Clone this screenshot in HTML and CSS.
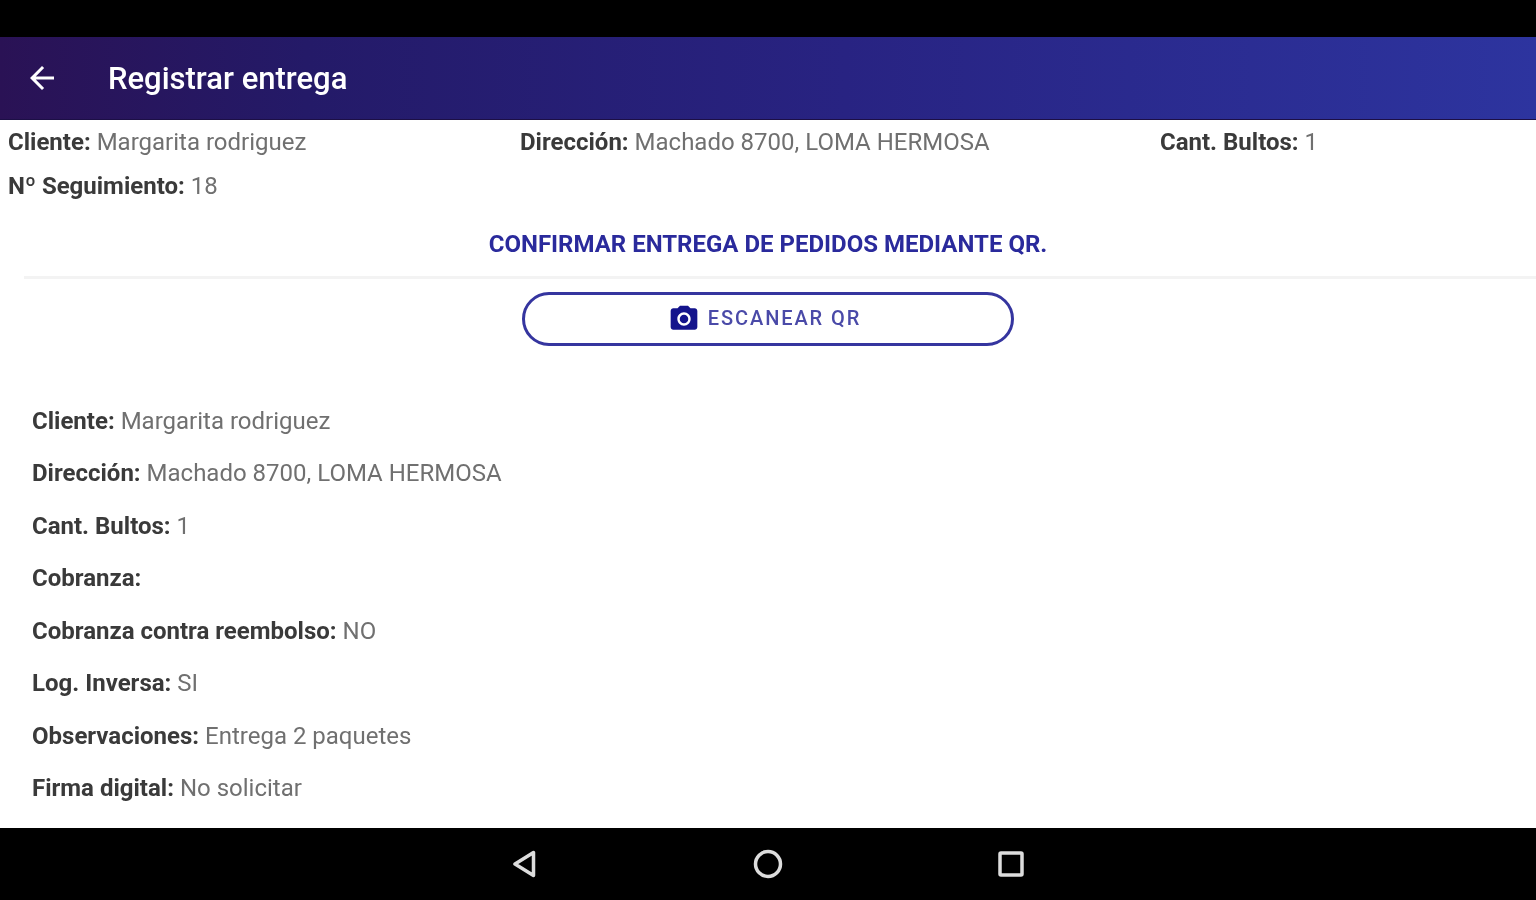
FILE: index.html
```html
<!DOCTYPE html>
<html lang="es">
<head>
  <meta charset="UTF-8">
  <title>Registrar entrega</title>
  <link rel="stylesheet" href="styles.css">
</head>
<body>
<div class="status-bar"></div>
<header class="toolbar">
  <svg class="back-icon" viewBox="0 0 24 24" width="36" height="36"><path d="M20 11H7.83l5.59-5.59L12 4l-8 8 8 8 1.41-1.41L7.83 13H20v-2z"/></svg>
  <h1>Registrar entrega</h1>
</header>
<main class="page">
  <div class="summary">
    <p class="summary-client"><b>Cliente:</b> Margarita rodriguez</p>
    <p class="summary-address"><b>Dirección:</b> Machado 8700, LOMA HERMOSA</p>
    <p><b>Cant. Bultos:</b> 1</p>
    <p class="summary-tracking"><b>Nº Seguimiento:</b> 18</p>
  </div>
  <h2 class="confirm-title">CONFIRMAR ENTREGA DE PEDIDOS MEDIANTE QR.</h2>
  <hr class="divider">
  <button class="scan-button">
    <svg viewBox="0 0 24 24" width="32" height="32"><path d="M9 2 7.17 4H4c-1.1 0-2 .9-2 2v12c0 1.1.9 2 2 2h16c1.1 0 2-.9 2-2V6c0-1.1-.9-2-2-2h-3.17L15 2H9zm3 15c-2.76 0-5-2.24-5-5s2.24-5 5-5 5 2.24 5 5-2.24 5-5 5zm0-8.2a3.2 3.2 0 1 0 0 6.4 3.2 3.2 0 0 0 0-6.4z"/></svg>
    <span>ESCANEAR QR</span>
  </button>
  <ul class="details">
    <li><b>Cliente:</b> Margarita rodriguez</li>
    <li><b>Dirección:</b> Machado 8700, LOMA HERMOSA</li>
    <li><b>Cant. Bultos:</b> 1</li>
    <li><b>Cobranza:</b></li>
    <li><b>Cobranza contra reembolso:</b> NO</li>
    <li><b>Log. Inversa:</b> SI</li>
    <li><b>Observaciones:</b> Entrega 2 paquetes</li>
    <li><b>Firma digital:</b> No solicitar</li>
  </ul>
</main>
<nav class="nav-bar">
  <svg viewBox="0 0 32 32" width="32" height="32"><path d="M24.5 4.5v23L6 16z"/></svg>
  <svg viewBox="0 0 32 32" width="32" height="32"><circle cx="16" cy="16" r="12.5"/></svg>
  <svg viewBox="0 0 32 32" width="32" height="32"><rect x="5" y="5" width="22" height="22" rx="1"/></svg>
</nav>
</body>
</html>
```

FILE: styles.css
```css
* {
  box-sizing: border-box;
}

html, body {
  width: 100%;
  height: 100%;
  overflow: hidden;
  margin: 0;
  padding: 0;
  font: 24px Roboto, sans-serif;
  background: #fff;
  color: #707070;
}

body {
  display: flex;
  flex-direction: column;
}

b {
  font-weight: 700;
  color: #3a3a3a;
}

.status-bar {
  height: 37px;
  background: #000;
}

.toolbar {
  height: 83px;
  display: flex;
  align-items: center;
  padding-left: 24px;
  background: linear-gradient(90deg, #2a1255, #241a68 20%, #282382 55%, #2d349f);
  border-bottom: 1px solid #1c0f45;
  color: #fff;
}

.back-icon {
  fill: #fff;
  filter: blur(0.5px);
}

.toolbar h1 {
  margin: 0 0 0 48px;
  font-size: 31px;
  font-weight: 500;
  filter: blur(0.6px);
}

.page {
  flex: 1;
  min-height: 0;
  filter: blur(0.7px);
}

.summary {
  display: grid;
  grid-template-columns: 512px 640px 1fr;
  padding: 0 0 0 8px;
}

.summary p {
  margin: 0;
  height: 44px;
  line-height: 44px;
}

.confirm-title {
  margin: 21px 0 0;
  height: 32px;
  line-height: 30px;
  text-align: center;
  font-size: 24px;
  font-weight: 700;
  color: #2a2a9c;
}

.divider {
  margin: 15px 0 0 24px;
  border: none;
  height: 3px;
  background: #f3f3f3;
}

.scan-button {
  display: flex;
  align-items: center;
  justify-content: center;
  gap: 8px;
  width: 492px;
  height: 54px;
  margin: 13px auto 0;
  padding: 0 7px 0 0;
  background: #fff;
  border: 3px solid #35359f;
  border-radius: 27px;
  color: #4a4aa8;
  font: 500 20px Roboto, sans-serif;
  letter-spacing: 1.9px;
}

.scan-button span {
  margin-bottom: 3px;
}

.scan-button svg {
  fill: #14148c;
}

.details {
  list-style: none;
  margin: 49px 0 0;
  padding: 0 0 0 32px;
}

.details li {
  height: 52.45px;
  line-height: 52.45px;
}

.nav-bar {
  height: 72px;
  display: flex;
  align-items: center;
  justify-content: center;
  gap: 211px;
  background: #000;
}

.nav-bar svg {
  fill: none;
  stroke: #ddd;
  stroke-width: 3.5;
  stroke-linejoin: round;
  filter: blur(0.4px);
}
```
